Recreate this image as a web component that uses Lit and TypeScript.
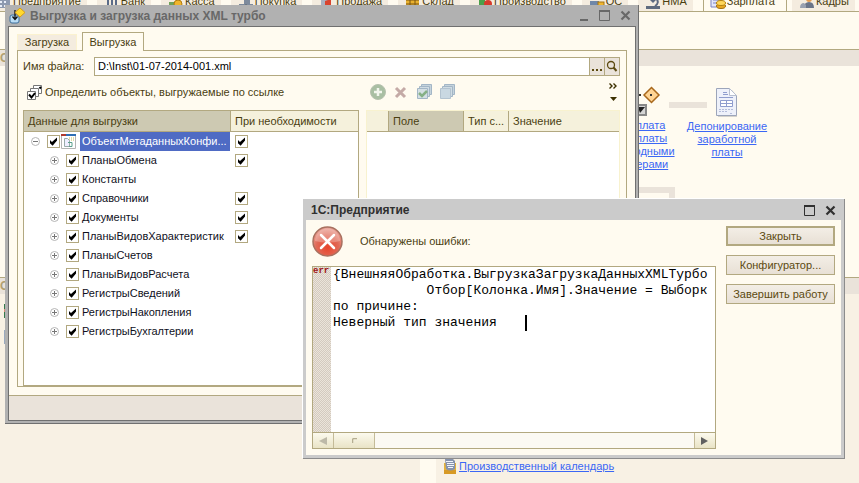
import { LitElement, html, svg, css, nothing } from "lit";
import { customElement, property } from "lit/decorators.js";

const MODULES = [
  { name: "Предприятие", icon: svg`<rect x="2" y="1" width="12" height="14" fill="#8d9ab0"/><path d="M4 4h2v2H4zM8 4h2v2H8zM4 8h2v2H4zM8 8h2v2H8zM4 12h2v2H4zM8 12h2v2H8z" fill="#e8eef8"/>` },
  { name: "Банк", icon: svg`<path d="M1 12h14v3H1z" fill="#7a8598"/><path d="M3 2h2v10H3zM7 2h2v10H7zM11 2h2v10h-2z" fill="#5b6b88"/>` },
  { name: "Касса", icon: svg`<path d="M1 9h9v3H1z" fill="#6fa35a"/><circle cx="10" cy="11" r="4" fill="#f0b52c" stroke="#b07c10"/>` },
  { name: "Покупка", icon: svg`<path d="M1 11h14v1.500H1zM6 6h6v5H6z" fill="#7d8a9c"/><circle cx="8" cy="13" r="1.500" fill="#444"/>` },
  { name: "Продажа", icon: svg`<path d="M2 4h10v10H2z" fill="#aab2c0"/><path d="M6 8l6-2v6l-6 1z" fill="#d9442e"/>` },
  { name: "Склад", icon: svg`<path d="M1 3h13v12H1z" fill="#e9b12e"/><path d="M1 7h13M1 11h13M5 3v12M10 3v12" stroke="#7a5410"/>` },
  { name: "Производство", icon: svg`<path d="M2 7h6v7H2z" fill="#4aa04a"/><circle cx="11" cy="11" r="4" fill="#d63a2c"/><path d="M1 12h7v3H1z" fill="#3d58a0"/>` },
  { name: "ОС", icon: svg`<path d="M1 8h9v6H1z" fill="#6f87a8"/><rect x="9" y="9" width="6" height="6" fill="#efb52e" stroke="#a37414"/>` },
  { name: "НМА", icon: svg`<path d="M7 3l4 4-3 3-3-3z" fill="#5d6a80"/><path d="M11 5q4 5-1 8" stroke="#5d6a80" stroke-width="2" fill="none"/><path d="M1 13h14v3H1z" fill="#5f6b7e"/>` },
  { name: "Зарплата", active: true, icon: svg`<path d="M1 1h10v13H1z" fill="#e3e6fa" stroke="#7d83c4"/><path d="M3 4h6M3 7h6M3 10h4" stroke="#7d83c4"/><ellipse cx="11" cy="13" rx="4.500" ry="2.500" fill="#e9a820" stroke="#a36f0c"/><ellipse cx="11" cy="10" rx="4.500" ry="2.500" fill="#ffd65a" stroke="#b5830f"/>` },
  { name: "Кадры", icon: svg`<circle cx="10" cy="6" r="3" fill="#e29a50"/><path d="M5 15q0-6 5-6t5 6z" fill="#6a7488"/><path d="M1 15q0-5 4-5l2 2v3z" fill="#98a0b0"/>` },
];

interface Row { name: string; needed: boolean; root?: boolean }
const ROWS: Row[] = [
  { name: "ОбъектМетаданныхКонфи...", needed: true, root: true },
  { name: "ПланыОбмена", needed: true },
  { name: "Константы", needed: false },
  { name: "Справочники", needed: true },
  { name: "Документы", needed: true },
  { name: "ПланыВидовХарактеристик", needed: true },
  { name: "ПланыСчетов", needed: false },
  { name: "ПланыВидовРасчета", needed: false },
  { name: "РегистрыСведений", needed: false },
  { name: "РегистрыНакопления", needed: false },
  { name: "РегистрыБухгалтерии", needed: false },
];

const ERROR_TEXT =
  "{ВнешняяОбработка.ВыгрузкаЗагрузкаДанныхXMLТурбо\n" +
  "            Отбор[Колонка.Имя].Значение = Выборк\n" +
  "по причине:\nНеверный тип значения";

const base = css`
  * { box-sizing: border-box; }
  svg { display: block; flex: none; }
  button, input, textarea { font: inherit; color: inherit; margin: 0; padding: 0; border: 0; background: none; border-radius: 0; }
  button { display: grid; place-items: center; }
`;

const closeIcon = html`<svg width="11" height="11" viewBox="0 0 11 11"><path d="M1.500 1.500l8 8M9.500 1.500l-8 8" stroke="currentColor" stroke-width="2.200"/></svg>`;
const maxIcon = html`<svg width="11" height="11" viewBox="0 0 11 11"><path d="M.5.5h10v10H.5z" fill="none" stroke="currentColor"/><path d="M0 1h11" stroke="currentColor" stroke-width="2"/></svg>`;
const minIcon = html`<svg width="8" height="11" viewBox="0 0 8 11"><path d="M0 10h8" stroke="currentColor" stroke-width="2"/></svg>`;

@customElement("desk-background")
class DeskBackground extends LitElement {
  static styles = [base, css`
    :host { display: flex; flex-direction: column; min-height: 100vh; overflow: hidden; }
    .modules { display: flex; height: 12px; align-items: flex-end; overflow: hidden; border-bottom: 1px solid #b2a880; }
    .module { display: flex; flex: none; gap: 1px; height: 20px; align-items: center; padding: 0 6px 0 7px; margin-right: 10px; background: #f4ecdf; color: #4a3e10; white-space: nowrap; }
    .module:first-child { margin-left: -11px; }
    .module.active { background: #fffbf0; margin: 0 5px 0 0; padding: 0 11px 0 6px; border: solid #b2a880; border-width: 0 1px; }
    .bar { height: 17px; margin: 0; border-top: 1px solid #b2a880; background: #eae3da; color: #b2a070; font-size: 12px; line-height: 16px; overflow: hidden; }
    .bar.top { margin-top: 37px; }
    .canvas { position: relative; height: 211px; }
    .node { position: absolute; width: 90px; display: grid; justify-items: center; text-align: center; line-height: 13px; }
    .payout { left: 598px; top: 20px; gap: 3px; }
    .deposit { left: 682px; top: 22px; gap: 2px; }
    a { color: #3b67f5; }
    .link { position: absolute; left: 669px; top: 36px; width: 38px; height: 6px; background: #eae3da; }
    .route { position: absolute; left: 600px; top: 121px; width: 75px; height: 40px; border: solid #eae3da; border-width: 6px 6px 0 0; }
    .panels { flex: 1; display: grid; grid-template-columns: 420fr 423fr; gap: 16px; }
    .panel { background: #f8f1e4; }
    .items { display: grid; gap: 12px; padding: 10px 0 0; }
    .refs { display: flex; gap: 3px; align-items: center; padding: 165px 0 0 8px; }
  `];
  render() {
    return html`
      <nav class="modules">${MODULES.map((m) => html`
        <span class="module ${m.active ? "active" : ""}"><svg width="16" height="16" viewBox="0 0 16 16">${m.icon}</svg>${m.name}</span>`)}
      </nav>
      <h2 class="bar top">С</h2>
      <div class="canvas">
        <div class="link"></div><div class="route"></div>
        <div class="node payout">
          <svg width="36" height="30" viewBox="0 0 36 30">
            <path d="M4 9h20" stroke="#333" stroke-width="2" stroke-dasharray="2 3"/>
            <path d="M26.500 1.500l7.500 7.500-7.500 7.500L19 9z" fill="#ffd493" stroke="#a8681c" stroke-width="1.500"/>
            <path d="M25 8h2v2h-2z" fill="#333"/>
            <path d="M8 19h13v10H8z" fill="#d5d5d5" stroke="#888" stroke-width="2"/><path d="M13 21l7 0-5 6z" fill="#222"/>
          </svg>
          <a href="#payout">Выплата<br>зарплаты<br>расходными<br>ордерами</a>
        </div>
        <div class="node deposit">
          <svg width="22" height="30" viewBox="0 0 22 30">
            <path d="M2 2h14l5 6v21H2z" fill="#d4d2cc"/>
            <path d="M.5.5h13l7 7v20H.5z" fill="#eef1fa" stroke="#9ca5ba"/>
            <path d="M13.500.5v7h7z" fill="#fff" stroke="#b8c0d0"/>
            <path d="M7 4.500h4M7 6.500h5M3 9.500h14" stroke="#8f9dce"/>
            <path d="M4.500 12.500h12v6h-12zM10.500 12.500v6M4.500 15.500h12" fill="#fff" stroke="#8f9dce"/>
            <path d="M3 21.500h15M3 23.500h9M14 25.500h3" stroke="#b4bddb" stroke-dasharray="2 1"/>
          </svg>
          <a href="#deposit">Депонирование<br>заработной<br>платы</a>
        </div>
      </div>
      <div class="panels">
        <section class="panel">
          <h2 class="bar">О</h2>
          <div class="items">
            <svg width="6" height="14" viewBox="0 0 6 14"><path d="M4 0h2v14H4z" fill="#357a4c"/><path d="M4 5h2v3H4z" fill="#d98b7a"/></svg>
            <svg width="6" height="14" viewBox="0 0 6 14"><path d="M4 0h2v14H4z" fill="#9aaabf"/></svg>
          </div>
        </section>
        <section class="panel">
          <h2 class="bar"></h2>
          <div class="refs">
            <svg width="12" height="15" viewBox="0 0 12 15"><path d="M0 4h12v11H0z" fill="#e6b23a"/><path d="M0 11h12v4H0z" fill="#d79a26"/><path d="M1 0h8l2 2v8q-5 3-9 0z" fill="#8793ad"/><path d="M2 2.500h7M3 4.500h7M3 6.500h7M4 8.500h5" stroke="#f2f4fb"/></svg>
            <a href="#calendar">Производственный календарь</a>
          </div>
        </section>
      </div>`;
  }
}

@customElement("export-window")
class ExportWindow extends LitElement {
  static styles = [base, css`
    :host { display: block; background: #b1b1b1; border: solid #707070; border-width: 0 1px 1px 0; padding: 0 2px 2px 3px; color: #4a3e10; }
    .title { display: flex; align-items: center; height: 21px; padding: 0 0 0 1px; color: #686868; }
    .title h1 { flex: 1; margin: 0 0 0 5px; font-size: 12px; line-height: 20px; white-space: nowrap; }
    .title button { width: 21px; height: 20px; }
    .frame { border: 1px solid #707070; background: #fffbf0; }
    .tabs { display: flex; align-items: flex-end; gap: 5px; padding: 5px 0 0 8px; }
    .tabs button { height: 16px; width: 60px; background: #f4ecdf; border: solid #fbf2cf; border-width: 1px 1px 0; }
    .tabs button.on { height: 19px; width: 62px; margin-bottom: -1px; background: #fffbf0; border: solid #b2a880; border-width: 1px 1px 0; position: relative; }
    .panel { margin: 0 8px 8px 8px; border: 1px solid #b2a880; padding: 6px 6px 0 5px; }
    .file { display: flex; align-items: center; }
    .file label { width: 71px; }
    .field { flex: 1; display: flex; height: 19px; border: 1px solid #b2a880; background: #fff; }
    .field input { flex: 1; min-width: 0; padding: 0 3px; color: #000; }
    .field button { width: 15px; background: #eae3da; border-left: 1px solid #b2a880; }
    .tools { display: flex; align-items: center; height: 34px; gap: 7px; padding-bottom: 2px; }
    .find { display: flex; gap: 3px; margin-left: 4px; width: 336px; justify-content: flex-start; align-items: center; white-space: nowrap; }
    .more { display: grid; gap: 8px; margin: 0 3px 0 auto; justify-items: center; }
    .grids { display: grid; grid-template-columns: 336fr 254fr; gap: 7px; min-height: 276px; }
    .box { background: #fff; border: 1px solid #b2a880; overflow: hidden; }
    .box.pale { border-color: #f8f2cf; }
    table { width: 100%; table-layout: fixed; border-collapse: separate; border-spacing: 0; }
    th { height: 21px; padding: 0 2px 0 4px; text-align: left; font-weight: 400; background: #f5f1dc; border-bottom: 1px solid #b2a880; border-left: 1px solid #b2a880; white-space: nowrap; }
    th:first-child { border-left: 0; }
    th.cur { background: #cdc9b2; }
    .c1 { width: 206px; }
    td { padding: 0; height: 19px; color: #10101c; }
    .cell { display: flex; align-items: center; height: 19px; padding-left: 26px; }
    .cell.root { padding-left: 7px; }
    .cell input { margin: 0 2px 0 7px; }
    .root input { margin-right: 1px; }
    .name { flex: 1; min-width: 0; line-height: 19px; white-space: nowrap; padding-left: 1px; }
    .root .name { background: #4f6bc4; color: #fff; margin-left: 4px; padding-left: 2px; }
    .need { padding-left: 5px; }
    input[type="checkbox"] { appearance: none; display: block; flex: none; width: 13px; height: 13px; border: 1px solid #b2a880; background: #fff; }
    input[type="checkbox"]:checked::before { content: ""; display: block; width: 11px; height: 11px; background: #000; clip-path: polygon(18% 36%, 36% 54%, 82% 14%, 82% 42%, 42% 88%, 18% 66%); }
    .i1 { width: 21px; } .i2 { width: 75px; } .i3 { width: 45px; }
    .foot { height: 25px; border-top: 1px solid #b2a880; background: #eae3da; }
  `];
  render() {
    const expander = (open: boolean) => svg`<svg width="9" height="9" viewBox="0 0 9 9"><circle cx="4.500" cy="4.500" r="4" fill="#fff" stroke="#b5b5b5"/><path d=${open ? "M2 4.500h5" : "M2 4.500h5M4.500 2v5"} stroke="#777"/></svg>`;
    return html`
      <header class="title">
        <svg width="16" height="16" viewBox="0 0 16 16"><rect x="1" y="7" width="9" height="8" rx="2" fill="#b9dcf5" stroke="#3d6f9c"/><path d="M6 2v9M3.500 8.500L6 11.500 8.500 8.500" stroke="#111" fill="none" stroke-width="1.300"/><path d="M11 0l5 4.500-5 4.500-5-4.500z" fill="#ffd92e" stroke="#d79d16"/></svg>
        <h1>Выгрузка и загрузка данных XML турбо</h1>
        <button aria-label="Свернуть">${minIcon}</button><button aria-label="Развернуть">${maxIcon}</button><button aria-label="Закрыть">${closeIcon}</button>
      </header>
      <div class="frame">
        <div class="tabs"><button>Загрузка</button><button class="on">Выгрузка</button></div>
        <div class="panel">
          <div class="file">
            <label for="file">Имя файла:</label>
            <div class="field">
              <input id="file" value="D:\\Inst\\01-07-2014-001.xml">
              <button aria-label="Выбрать"><svg width="11" height="13" viewBox="0 0 11 13"><path d="M0 9h2v2H0zM4 9h2v2H4zM8 9h2v2H8z" fill="#5c4a10"/></svg></button>
              <button aria-label="Открыть"><svg width="12" height="13" viewBox="0 0 12 13"><circle cx="5" cy="5" r="3.500" fill="none" stroke="#5c4a10" stroke-width="1.300"/><path d="M7.500 7.500l3 3.500" stroke="#5c4a10" stroke-width="2"/></svg></button>
            </div>
          </div>
          <div class="tools">
            <button class="find"><svg width="15" height="15" viewBox="0 0 15 15"><path d="M6.500.5h8v8h-8z" fill="#fff" stroke="#777"/><path d="M3.500 3.500h8v8h-8z" fill="#fff" stroke="#777"/><path d="M.5 6.500h8v8h-8z" fill="#fff" stroke="#777"/><path d="M2 9.500l2.500 3L8 8M12.500 3.500L14 2" stroke="#000" stroke-width="2" fill="none"/></svg>Определить объекты, выгружаемые по ссылке</button>
            <button aria-label="Добавить"><svg width="16" height="16" viewBox="0 0 16 16"><circle cx="8" cy="8" r="7.500" fill="#a9bfa3" stroke="#b7c2af"/><path d="M8 4v8M4 8h8" stroke="#f3f6ee" stroke-width="2.500"/></svg></button>
            <button aria-label="Удалить"><svg width="16" height="16" viewBox="0 0 16 16"><path d="M3 4l9 9M12 4l-9 9" stroke="#c4aaa6" stroke-width="3"/></svg></button>
            <button aria-label="Отметить все"><svg width="16" height="16" viewBox="0 0 16 16"><path d="M5.500.5h10v10h-10z" fill="#c5d3dc" stroke="#a3b6c6"/><path d="M3.500 2.500h10v10h-10z" fill="#d0dce3" stroke="#a3b6c6"/><path d="M1.500 4.500h10v10h-10z" fill="#d5e0e4" stroke="#a3b6c6"/><path d="M3 9l3 3 5-5" stroke="#86b086" stroke-width="2.500" fill="none"/></svg></button>
            <button aria-label="Снять отметки"><svg width="16" height="16" viewBox="0 0 16 16"><path d="M5.500.5h10v10h-10z" fill="#c5d3dc" stroke="#a3b6c6"/><path d="M3.500 2.500h10v10h-10z" fill="#d0dce3" stroke="#a3b6c6"/><path d="M1.500 4.500h10v10h-10z" fill="#c9d8e2" stroke="#b3c3d0"/></svg></button>
            <div class="more">
              <button aria-label="Ещё"><svg width="8" height="6" viewBox="0 0 8 6"><path d="M.5.5L3 3 .5 5.500M4.500.5L7 3 4.500 5.500" fill="none" stroke="#3c3000" stroke-width="1.400"/></svg></button>
              <button aria-label="Меню"><svg width="7" height="4" viewBox="0 0 7 4"><path d="M0 0h7L3.500 4z" fill="#3c3000"/></svg></button>
            </div>
          </div>
          <div class="grids">
            <div class="box">
              <table>
                <thead><tr><th class="c1 cur">Данные для выгрузки</th><th>При необходимости</th></tr></thead>
                <tbody>${ROWS.map((r) => html`<tr>
                  <td><div class="cell ${r.root ? "root" : ""}">${expander(!!r.root)}
                    <input type="checkbox" checked aria-label=${r.name}>
                    ${r.root ? html`<svg width="15" height="15" viewBox="0 0 15 15"><path d="M.5.5h14v14H.5z" fill="#fff" stroke="#b4b4b4"/><path d="M0 0h5v2H0z" fill="#b03a2e"/><path d="M5 0h10v2H5z" fill="#2f6fb4"/><path d="M8 4h5M8 6h5" stroke="#c7b94a" stroke-dasharray="1 1"/><path d="M3.500 4.500h3l2 2v6h-5z" fill="#eef" stroke="#9aa"/><path d="M7 8.500h4v4H8" fill="none" stroke="#5aa08c"/></svg>` : nothing}
                    <span class="name">${r.name}</span></div></td>
                  <td class="need">${r.needed ? html`<input type="checkbox" checked aria-label="При необходимости: ${r.name}">` : nothing}</td>
                </tr>`)}</tbody>
              </table>
            </div>
            <div class="box pale">
              <table><thead><tr><th class="i1"></th><th class="i2 cur">Поле</th><th class="i3">Тип с...</th><th>Значение</th></tr></thead></table>
            </div>
          </div>
        </div>
        <div class="foot"></div>
      </div>`;
  }
}

@customElement("error-dialog")
class ErrorDialog extends LitElement {
  static styles = [base, css`
    :host { display: block; background: #cbcbcb; border: solid #8c8c8c; border-width: 0 1px 1px 0; padding: 0 3px 3px; color: #5c4a10; box-shadow: -1px -1px #fff; }
    .title { display: flex; align-items: center; height: 21px; padding: 2px 0 0 5px; color: #303030; }
    .title h1 { flex: 1; margin: 0; font-size: 12px; }
    .title button { width: 21px; height: 20px; }
    .body { display: grid; grid-template-columns: 1fr 109px; gap: 10px; padding: 6px; background: #fffbf0; }
    .msg { display: flex; align-items: center; height: 31px; gap: 17px; margin: 0 0 9px; color: #4a3e10; }
    .editor { border: 1px solid #b2a880; background: #fff; }
    .text { position: relative; display: flex; height: 165px; }
    .gutter { width: 18px; color: #a01818; font: bold 9px/9px "Liberation Mono", monospace; background: repeating-conic-gradient(#d3cabf 0 25%, #ebe4da 0 50%) 0 0 / 2px 2px; }
    textarea { flex: 1; min-width: 0; padding: 0 0 0 2px; resize: none; overflow: hidden; outline: 0; color: #000; font: 13px/16px "Liberation Mono", monospace; white-space: pre; }
    .caret { position: absolute; left: 212px; top: 48px; width: 2px; height: 16px; background: #000; }
    .scroll { display: flex; height: 16px; border-top: 1px solid #b2a880; background: #fbf9f3; }
    .scroll button { width: 21px; background: linear-gradient(#fcfaee, #e9e3c6); border: solid #c4bb98; border-width: 0 1px 0 0; }
    .scroll .thumb { width: 41px; }
    .scroll .right { margin-left: auto; border-width: 0 0 0 1px; }
    .actions { display: grid; align-content: start; gap: 9px; }
    .actions button { height: 20px; background: linear-gradient(#f3eee6, #e8e0d5); border: 1px solid #b2a880; white-space: nowrap; }
    .actions .main { border-width: 2px; }
  `];
  @property() message = "Обнаружены ошибки:";
  render() {
    return html`
      <header class="title"><h1>1С:Предприятие</h1><button aria-label="Развернуть">${maxIcon}</button><button aria-label="Закрыть">${closeIcon}</button></header>
      <div class="body">
        <div>
          <p class="msg"><svg width="31" height="31" viewBox="0 0 31 31">
            <defs><radialGradient id="g" cx=".5" cy=".7" r=".7"><stop offset="0" stop-color="#e8452c"/><stop offset=".55" stop-color="#e06a58"/><stop offset="1" stop-color="#eaa79c"/></radialGradient></defs>
            <circle cx="15.500" cy="15.500" r="14.500" fill="url(#g)" stroke="#a8705f" stroke-width="1.500"/><path d="M3 15a12.500 12.500 0 0 1 25 0q-12 3-25 0z" fill="#fff" opacity=".25"/>
            <path d="M9 9l13 13M22 9L9 22" stroke="#fff" stroke-width="2.500" stroke-linecap="round"/></svg><label for="err">${this.message}</label></p>
          <div class="editor">
            <div class="text"><div class="gutter">err</div><textarea id="err" readonly wrap="off" .value=${ERROR_TEXT}></textarea><div class="caret"></div></div>
            <div class="scroll">
              <button aria-label="Влево"><svg width="8" height="8" viewBox="0 0 8 8"><path d="M8 0v8L0 4z" fill="#bdb9a8"/></svg></button>
              <button class="thumb" aria-label="Прокрутка"><svg width="5" height="5" viewBox="0 0 5 5"><path d="M.5 5V1.500L1.500.5H5" fill="none" stroke="#b5ae92" stroke-width="1.500"/></svg></button>
              <button class="right" aria-label="Вправо"><svg width="8" height="8" viewBox="0 0 8 8"><path d="M0 0v8l7-4z" fill="#606060"/></svg></button>
            </div>
          </div>
        </div>
        <div class="actions"><button class="main">Закрыть</button><button>Конфигуратор...</button><button>Завершить работу</button></div>
      </div>`;
  }
}

@customElement("app-root")
class AppRoot extends LitElement {
  static styles = css`
    :host { display: block; position: relative; min-height: 100vh; overflow: hidden; background: #fffbf0; font: 11px/13px "Liberation Sans", Arial, sans-serif; }
    export-window { position: absolute; left: 5px; right: 220px; top: 5px; }
    error-dialog { position: absolute; left: 303px; right: 14px; top: 199px; }
  `;
  render() {
    return html`<desk-background></desk-background><export-window></export-window><error-dialog></error-dialog>`;
  }
}
